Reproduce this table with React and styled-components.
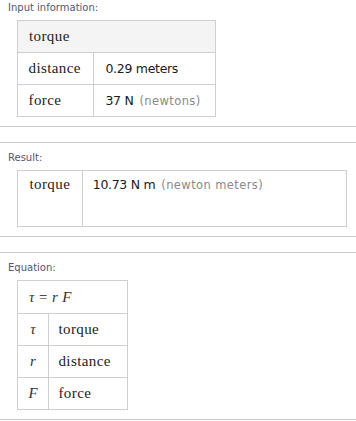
import React from "react";
import styled, { createGlobalStyle } from "styled-components";

const Global = createGlobalStyle`
  html, body { margin: 0; padding: 0; background: #fff; }
  body { width: 356px; overflow: hidden; }
`;

const Page = styled.div`
  display: flex;
  flex-direction: column;
  gap: 15px;
`;

const Pod = styled.section`
  border-top: ${(p) => (p.$first ? "none" : "1px solid #c8c8c8")};
  border-bottom: 1px solid #c8c8c8;
  padding: ${(p) => (p.$first ? "2px" : "9px")} 0 9px 0;
`;

const Label = styled.div`
  font-family: "DejaVu Sans", sans-serif;
  font-size: 10px;
  line-height: 12px;
  color: #55557a;
  padding-left: 8px;
  margin-bottom: 6px;
`;

const Table = styled.table`
  border-collapse: collapse;
  margin-left: 17px;
  width: ${(p) => p.$width}px;
`;

const Cell = styled.td`
  border: 1px solid #cfcfcf;
  padding: 0 ${(p) => (p.$pad ?? 11)}px;
  height: ${(p) => p.$h ?? 31}px;
  vertical-align: ${(p) => p.$valign ?? "middle"};
  text-align: ${(p) => p.$align ?? "left"};
  background: ${(p) => (p.$head ? "#f4f4f4" : "#fff")};
  font-family: "Liberation Serif", serif;
  font-size: 15px;
  letter-spacing: 0.4px;
  color: #222;
  white-space: nowrap;
`;

const Var = styled.span`
  font-family: "Liberation Serif", serif;
  font-style: italic;
  color: #333;
`;

const Value = styled.span`
  font-family: "DejaVu Sans", sans-serif;
  font-size: 12.5px;
  letter-spacing: -0.3px;
  color: #1a1a1a;
`;

const Unit = styled.span`
  font-family: "DejaVu Sans", sans-serif;
  font-size: 11.5px;
  color: #8a8a8a;
  margin-left: 6px;
`;

const ResultText = styled.div`
  padding-top: 5px;
`;

export default function App() {
  return (
    <>
      <Global />
      <Page>
        <Pod $first>
          <Label>Input information:</Label>
          <Table $width={199}>
            <tbody>
              <tr>
                <Cell colSpan={2} $head>torque</Cell>
              </tr>
              <tr>
                <Cell $pad={10.5}>distance</Cell>
                <Cell><Value>0.29 meters</Value></Cell>
              </tr>
              <tr>
                <Cell $pad={10.5}>force</Cell>
                <Cell><Value>37 N</Value><Unit>(newtons)</Unit></Cell>
              </tr>
            </tbody>
          </Table>
        </Pod>

        <Pod>
          <Label>Result:</Label>
          <Table $width={330}>
            <tbody>
              <tr>
                <Cell $h={55} $valign="top" $pad={11.5}><ResultText>torque</ResultText></Cell>
                <Cell $h={55} $valign="top" $pad={10} style={{ width: "100%" }}>
                  <ResultText><Value>10.73 N m</Value><Unit>(newton meters)</Unit></ResultText>
                </Cell>
              </tr>
            </tbody>
          </Table>
        </Pod>

        <Pod>
          <Label>Equation:</Label>
          <Table $width={111}>
            <tbody>
              <tr>
                <Cell colSpan={2} $h={32}><Var>τ</Var> = <Var>r F</Var></Cell>
              </tr>
              <tr>
                <Cell $align="center" $pad={9}><Var>τ</Var></Cell>
                <Cell $pad={9}>torque</Cell>
              </tr>
              <tr>
                <Cell $align="center" $pad={9}><Var>r</Var></Cell>
                <Cell $pad={9}>distance</Cell>
              </tr>
              <tr>
                <Cell $align="center" $pad={9}><Var>F</Var></Cell>
                <Cell $pad={9}>force</Cell>
              </tr>
            </tbody>
          </Table>
        </Pod>
      </Page>
    </>
  );
}
